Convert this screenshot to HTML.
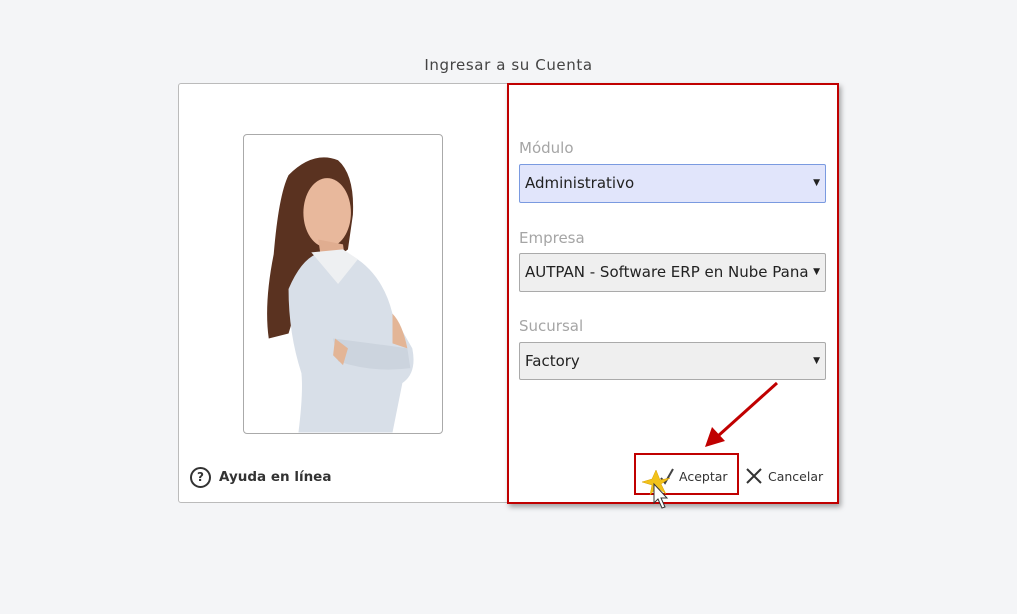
<!DOCTYPE html>
<html><head><meta charset="utf-8"><style>
body{margin:0;width:1017px;height:614px;background:#f4f5f7;font-family:"DejaVu Sans","Liberation Sans",sans-serif;position:relative;overflow:hidden}
.a{position:absolute}
.title{left:0;width:1017px;top:56px;text-align:center;font-size:15px;color:#444;letter-spacing:.6px}
.panel{left:178px;top:83px;width:659px;height:418px;background:#fff;border:1px solid #bbb;border-radius:3px}
.red{left:507px;top:83px;width:328px;height:417px;border:2px solid #c00000;box-shadow:2px 3px 5px rgba(0,0,0,.35)}
.photo{left:243px;top:134px;width:198px;height:298px;border:1px solid #aaa;border-radius:4px;background:#fff;overflow:hidden}
.lbl{font-size:15px;color:#a5a5a5}
.sel{left:519px;width:305px;height:37px;border:1px solid #aaa;border-radius:2px;background:#efefef;font-size:15px;color:#222;line-height:37px;box-sizing:content-box;white-space:nowrap;overflow:hidden}
.sel span{position:absolute;left:5px}
.sel i{position:absolute;right:5px;top:0;font-style:normal;font-size:9px;color:#222}
</style></head><body>
<div class="a title">Ingresar a su Cuenta</div>
<div class="a panel"></div>
<div class="a photo"><svg width="198" height="298" viewBox="0 0 200 300">
<path d="M45 40 Q70 15 95 25 Q112 40 110 80 L105 115 L60 150 L45 200 L25 205 Q20 170 30 120 Q35 60 45 40Z" fill="#5a3220"/>
<ellipse cx="84" cy="78" rx="24" ry="35" fill="#e8b89c"/>
<path d="M75 105 L100 110 L102 125 L78 125Z" fill="#e0ad90"/>
<path d="M45 155 Q60 120 80 118 L110 122 Q140 140 150 180 L170 215 Q175 240 160 250 L150 300 L55 300 Q60 260 58 240 Q45 200 45 155Z" fill="#d8dfe8"/>
<path d="M68 118 L95 150 L115 125 L100 115 Z" fill="#eef0f2"/>
<path d="M90 205 Q130 210 165 215 L168 235 Q130 240 95 228Z" fill="#ccd4de"/>
<path d="M150 180 Q160 190 165 215 L150 210Z" fill="#e3b596"/>
<path d="M92 205 L105 215 L100 232 L90 222Z" fill="#e3b596"/>
</svg></div>
<div class="a red"></div>
<div class="a lbl" style="left:519px;top:139px">Módulo</div>
<div class="a sel" style="top:164px;background:#e1e5fb;border-color:#7a9ae0"><span>Administrativo</span><i>▼</i></div>
<div class="a lbl" style="left:519px;top:229px">Empresa</div>
<div class="a sel" style="top:253px"><span>AUTPAN - Software ERP en Nube Pana</span><i style="background:#efefef;padding-left:2px">▼</i></div>
<div class="a lbl" style="left:519px;top:317px">Sucursal</div>
<div class="a sel" style="top:342px;height:36px;line-height:36px"><span>Factory</span><i>▼</i></div>
<div class="a" style="left:190px;top:467px;width:17px;height:17px;border:2px solid #333;border-radius:50%;text-align:center;font-weight:bold;font-size:12px;line-height:17px;color:#333">?</div>
<div class="a" style="left:219px;top:469px;font-size:13.5px;font-weight:bold;color:#333">Ayuda en línea</div>
<svg class="a" style="left:0;top:0" width="1017" height="614">
<line x1="777" y1="383" x2="718" y2="436" stroke="#c00000" stroke-width="3"/>
<polygon points="705,447 712,427 725,441" fill="#c00000"/>
<rect x="635" y="454" width="103" height="40" fill="none" stroke="#c00000" stroke-width="2"/>
<path d="M661 478 L665 483 L673 469" fill="none" stroke="#444" stroke-width="2"/>
<path d="M747 469 L761 483 M761 469 L747 483" stroke="#333" stroke-width="2"/>
<path d="M656 470 L660 480 L670 478 L661 484 L666 494 L657 487 L650 495 L652 485 L642 482 L652 479Z" fill="#f2c21a" stroke="#d9a000" stroke-width=".5"/>
<path d="M654 484 L654 503 L658 499 L662 508 L665 507 L661 498 L667 498Z" fill="#fff" stroke="#333" stroke-width="1"/>
</svg>
<div class="a" style="left:679px;top:469px;font-size:12.5px;color:#333">Aceptar</div>
<div class="a" style="left:768px;top:469px;font-size:12.5px;color:#333">Cancelar</div>
</body></html>
